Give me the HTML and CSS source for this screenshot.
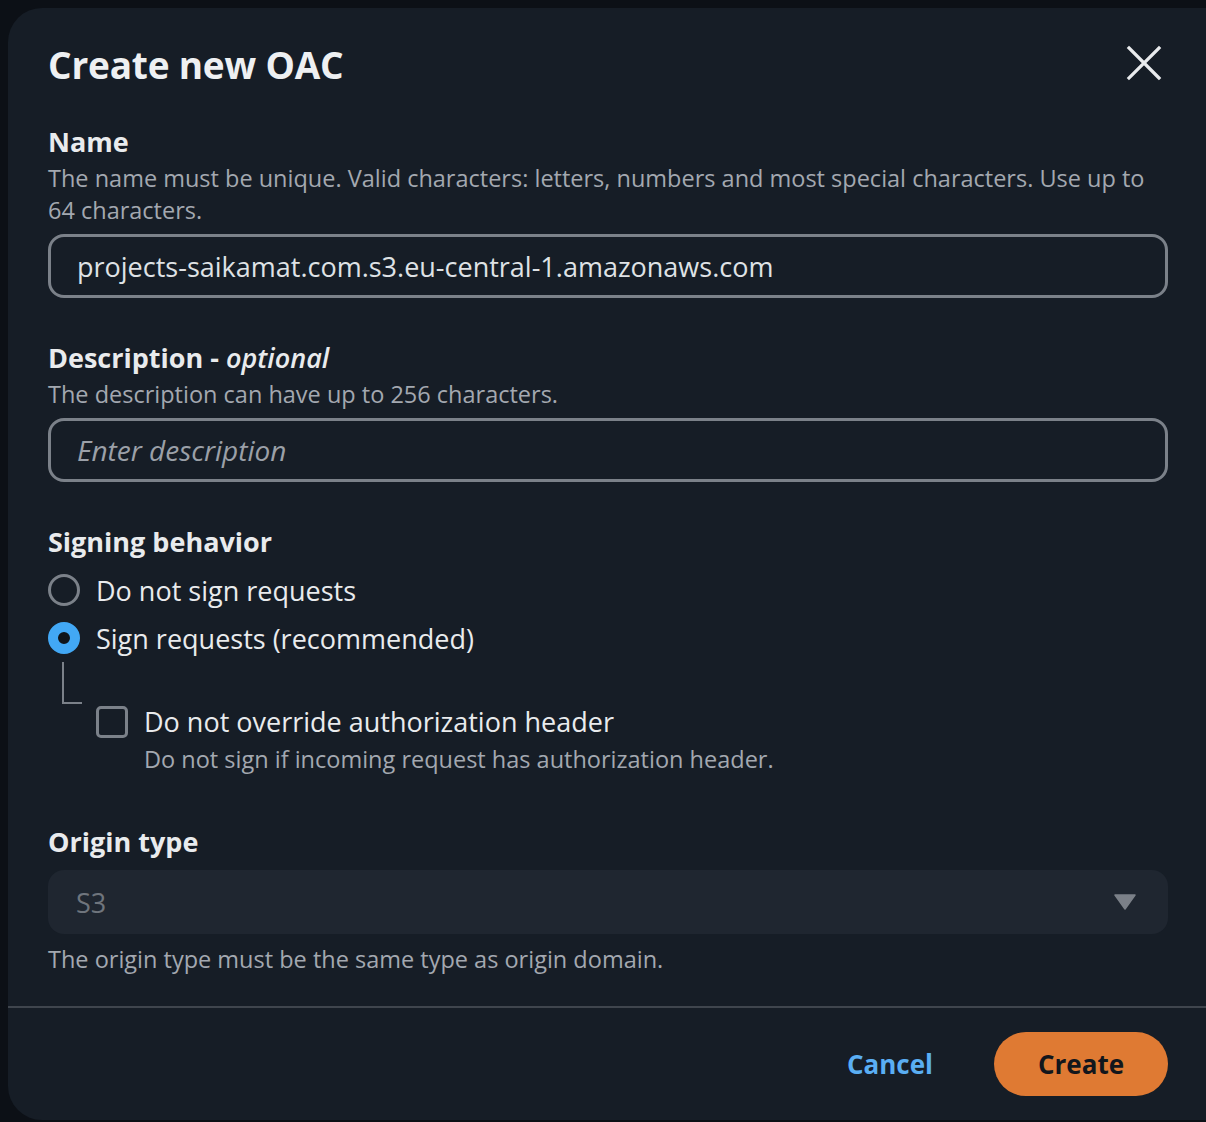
FILE: index.html
```html
<!DOCTYPE html>
<html>
<head>
<meta charset="utf-8">
<link rel="stylesheet" href="styles.css">
</head>
<body>
<div class="backdrop">
  <div class="modal">
    <div class="modal-body">
      <div class="header">
        <h1 class="title">Create new OAC</h1>
        <button class="close" aria-label="Close">
          <svg width="36" height="36" viewBox="0 0 36 36"><path d="M3 3 L33 33 M33 3 L3 33" stroke="#e9ebed" stroke-width="3.2" stroke-linecap="square" fill="none"/></svg>
        </button>
      </div>

      <div class="field">
        <div class="label">Name</div>
        <div class="hint">The name must be unique. Valid characters: letters, numbers and most special characters. Use up to 64 characters.</div>
        <div class="input">projects-saikamat.com.s3.eu-central-1.amazonaws.com</div>
      </div>

      <div class="field">
        <div class="label">Description <span class="opt">- <i>optional</i></span></div>
        <div class="hint">The description can have up to 256 characters.</div>
        <div class="input placeholder">Enter description</div>
      </div>

      <div class="field signing">
        <div class="label">Signing behavior</div>
        <div class="radios">
          <div class="radio-row">
            <span class="radio"></span>
            <span class="radio-text">Do not sign requests</span>
          </div>
          <div class="radio-row">
            <span class="radio checked"></span>
            <span class="radio-text">Sign requests (recommended)</span>
          </div>
        </div>
        <div class="nested">
          <span class="tree"></span>
          <div class="check-row">
            <span class="checkbox"></span>
            <div class="check-text">
              <div class="check-label">Do not override authorization header</div>
              <div class="hint sub">Do not sign if incoming request has authorization header.</div>
            </div>
          </div>
        </div>
      </div>

      <div class="field origin">
        <div class="label">Origin type</div>
        <div class="select">
          <span>S3</span>
          <svg width="22" height="16" viewBox="0 0 22 16"><path d="M1 1 H21 L11 15 Z" fill="#7b8088" stroke="#7b8088" stroke-width="1.5" stroke-linejoin="round"/></svg>
        </div>
        <div class="hint after">The origin type must be the same type as origin domain.</div>
      </div>
    </div>
    <div class="footer">
      <button class="cancel">Cancel</button>
      <button class="create">Create</button>
    </div>
  </div>
</div>
</body>
</html>
```
FILE: styles.css
```css
* { box-sizing: border-box; }
html, body { margin: 0; padding: 0; }
body {
  background: #0c1016;
  font-family: "Open Sans", "Noto Sans", sans-serif;
  color: #e9ebed;
  width: 1206px;
  height: 1122px;
  overflow: hidden;
}
.backdrop {
  padding: 8px 0 0 8px;
  height: 1122px;
}
.modal {
  background: #161d26;
  border-radius: 34px;
  width: 1230px;
  height: 1112px;
  display: flex;
  flex-direction: column;
}
.modal-body {
  padding: 22px 0 0 40px;
  width: 1160px;
  flex: 1;
}
.header {
  display: flex;
  justify-content: space-between;
  align-items: center;
  height: 68px;
  margin-bottom: 27px;
}
.title {
  margin: 0;
  font-size: 37px;
  font-weight: 700;
  letter-spacing: -0.2px;
  color: #eef0f2;
}
.close {
  background: none;
  border: 0;
  padding: 0;
  width: 36px;
  height: 36px;
  margin-right: 6px;
  margin-top: -2px;
}
.field { margin-bottom: 43px; }
.label {
  font-size: 27px;
  font-weight: 700;
  line-height: 34px;
  color: #e9ebed;
}
.opt { font-weight: 700; }
.opt i { font-weight: 600; }
.hint {
  font-size: 23.5px;
  line-height: 32px;
  color: #a3a8b0;
  margin-top: 3px;
}
.input {
  margin-top: 8px;
  height: 64px;
  border: 3px solid #7b8189;
  border-radius: 16px;
  padding: 0 26px;
  display: flex;
  align-items: center;
  font-size: 27px;
  color: #dfe2e5;
}
.placeholder { font-style: italic; color: #9ba0a8; font-size: 28px; }

.signing { margin-bottom: 0; }
.radios { margin-top: 7px; }
.radio-row {
  display: flex;
  align-items: center;
  height: 48px;
}
.radio {
  width: 32px;
  height: 32px;
  border-radius: 50%;
  border: 3px solid #7b8189;
  margin-right: 16px;
  flex: none;
}
.radio.checked {
  border: 10px solid #42a8f5;
  background: #0f141a;
}
.radio-text { font-size: 27px; color: #e9ebed; }
.nested {
  display: flex;
  padding-left: 14px;
}
.tree {
  width: 20px;
  height: 42px;
  border-left: 2px solid #7b8189;
  border-bottom: 2px solid #7b8189;
  flex: none;
}
.check-row {
  display: flex;
  margin-top: 44px;
  margin-left: 14px;
}
.checkbox {
  width: 32px;
  height: 32px;
  border: 3px solid #7b8189;
  border-radius: 5px;
  margin-right: 16px;
  flex: none;
}
.check-label {
  font-size: 27px;
  line-height: 32px;
  color: #e9ebed;
}
.hint.sub { margin-top: 5px; }
.origin { margin-top: 50px; margin-bottom: 0; }
.select {
  margin-top: 11px;
  height: 64px;
  background: #1f2630;
  border-radius: 16px;
  padding: 0 32px 0 28px;
  display: flex;
  align-items: center;
  justify-content: space-between;
  font-size: 27px;
  color: #6f757d;
}
.hint.after { margin-top: 9px; }
.footer {
  border-top: 2px solid #3f454d;
  height: 114px;
  display: flex;
  align-items: center;
  justify-content: flex-end;
  padding-right: 70px;
  gap: 61px;
}
.cancel {
  background: none;
  border: 0;
  font-family: inherit;
  font-size: 26px;
  font-weight: 700;
  color: #5aaef3;
  padding: 0;
}
.create {
  background: #df7a33;
  border: 0;
  border-radius: 40px;
  width: 174px;
  height: 64px;
  font-family: inherit;
  font-size: 26px;
  font-weight: 700;
  color: #12161c;
}
```
